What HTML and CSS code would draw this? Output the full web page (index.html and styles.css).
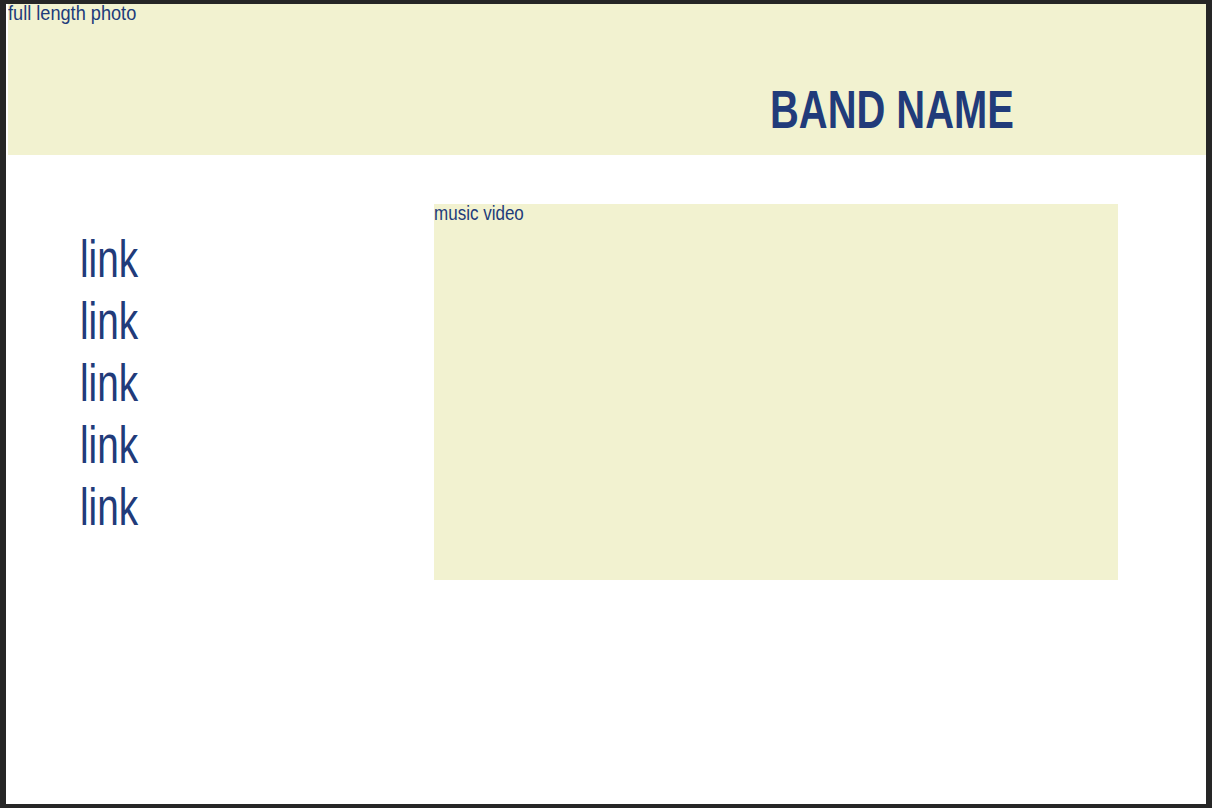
FILE: index.html
```html
<!DOCTYPE html>
<html>
<head>
<meta charset="utf-8">
<link rel="stylesheet" href="styles.css">
</head>
<body>
<div class="frame">
  <header class="header">
    <div class="photo-label"><span class="narrow n-photo">full length photo</span></div>
    <h1 class="band"><span class="narrow n-band">BAND NAME</span></h1>
  </header>
  <main class="main">
    <nav class="links">
      <a class="link"><span class="narrow n-link">link</span></a>
      <a class="link"><span class="narrow n-link">link</span></a>
      <a class="link"><span class="narrow n-link">link</span></a>
      <a class="link"><span class="narrow n-link">link</span></a>
      <a class="link"><span class="narrow n-link">link</span></a>
    </nav>
    <div class="video"><span class="video-label"><span class="narrow n-video">music video</span></span></div>
  </main>
</div>
</body>
</html>
```
FILE: styles.css
```css
html, body {
  margin: 0;
  padding: 0;
  background: #262626;
}
body {
  width: 1212px;
  height: 808px;
  overflow: hidden;
  font-family: "Liberation Sans", Arial, sans-serif;
  color: #213b7a;
}
.frame {
  margin: 4px 6px 0 6px;
  width: 1200px;
  height: 800px;
  background: #fff;
}
.header {
  margin-left: 2px;
  height: 151px;
  background: #f2f2d0;
  display: flex;
  flex-direction: column;
}
.narrow {
  display: inline-block;
  white-space: nowrap;
  transform-origin: left center;
}
.n-photo { transform: scaleX(0.865); }
.n-video { transform: scaleX(0.81); }
.n-band { transform: scaleX(0.753); }
.n-link { transform: scaleX(0.76); }
.photo-label {
  font-size: 21px;
  line-height: 17px;
  height: 18px;
}
.band {
  margin: 61px 0 0 762px;
  font-size: 53px;
  font-weight: bold;
  line-height: 53px;
}
.main {
  display: flex;
  padding-top: 49px;
}
.links {
  display: flex;
  flex-direction: column;
  padding: 25px 0 0 74px;
  width: 354px;
}
.link {
  font-size: 51px;
  line-height: 62px;
}
.video {
  width: 684px;
  height: 376px;
  background: #f2f2d0;
}
.video-label {
  display: block;
  font-size: 21px;
  line-height: 18px;
}
```
